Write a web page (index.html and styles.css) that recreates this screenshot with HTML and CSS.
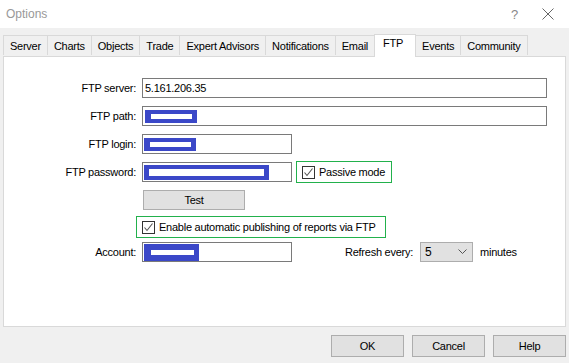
FILE: index.html
```html
<!DOCTYPE html>
<html lang="en">
<head>
	<meta charset="UTF-8">
	<title>Options</title>
<link rel="stylesheet" href="styles.css">
</head>
<body>

<div class="dialog">
	<div class="titleBar">
		<span class="title">Options</span>
		<span class="helpMark">?</span>
		<svg class="closeX" width="12" height="12" viewBox="0 0 12 12">
			<path d="M0.5 0.5 L11.5 11.5 M11.5 0.5 L0.5 11.5" stroke="#666" stroke-width="1" fill="none"/>
		</svg>
	</div>

	<div class="content">
		<div class="tabs">
			<div class="tab">Server</div>
			<div class="tab">Charts</div>
			<div class="tab">Objects</div>
			<div class="tab">Trade</div>
			<div class="tab">Expert Advisors</div>
			<div class="tab">Notifications</div>
			<div class="tab">Email</div>
			<div class="tab active">FTP</div>
			<div class="tab">Events</div>
			<div class="tab">Community</div>
		</div>

		<div class="panel">
			<div class="row first">
				<label class="lbl">FTP server:</label>
				<div class="field wide">5.161.206.35</div>
			</div>

			<div class="row">
				<label class="lbl">FTP path:</label>
				<div class="field wide"><span class="redact short"><span class="bar"></span></span></div>
			</div>

			<div class="row">
				<label class="lbl">FTP login:</label>
				<div class="field small"><span class="redact short"><span class="bar"></span></span></div>
			</div>

			<div class="row">
				<label class="lbl">FTP password:</label>
				<div class="field small"><span class="redact long"><span class="bar"></span></span></div>
				<div class="checkGroup passive">
					<span class="checkBox"><svg width="11" height="11" viewBox="0 0 11 11"><path d="M1.5 5.5 L4 8.5 L9.5 1.5" stroke="#555" stroke-width="1.1" fill="none"/></svg></span>
					<span>Passive mode</span>
				</div>
			</div>

			<div class="row testRow">
				<button class="btn test">Test</button>
			</div>

			<div class="row enableRow">
				<div class="checkGroup enable">
					<span class="checkBox"><svg width="11" height="11" viewBox="0 0 11 11"><path d="M1.5 5.5 L4 8.5 L9.5 1.5" stroke="#555" stroke-width="1.1" fill="none"/></svg></span>
					<span>Enable automatic publishing of reports via FTP</span>
				</div>
			</div>

			<div class="row">
				<label class="lbl">Account:</label>
				<div class="field small"><span class="redact short acc"><span class="bar"></span></span></div>
				<span class="refreshLbl">Refresh every:</span>
				<div class="select">
					<span>5</span>
					<svg width="9" height="6" viewBox="0 0 9 6"><path d="M0.5 0.5 L4.5 4.5 L8.5 0.5" stroke="#555" stroke-width="1" fill="none"/></svg>
				</div>
				<span class="unit">minutes</span>
			</div>
		</div>
	</div>

	<div class="footer">
		<button class="btn">OK</button>
		<button class="btn">Cancel</button>
		<button class="btn">Help</button>
	</div>
</div>

</body>
</html>
```

FILE: styles.css
```css
/* reset */
*{
	margin: 0;
	padding: 0;
	box-sizing: border-box;
}

body{
	width: 569px;
	height: 363px;
	background: #f0f0f0;
	font-family: "Liberation Sans", Arial, sans-serif;
	font-size: 11px;
	letter-spacing: -0.25px;
	color: #000;
	overflow: hidden;
}

.dialog{
	width: 569px;
	height: 363px;
	display: flex;
	flex-direction: column;
}

/* title bar */
.titleBar{
	height: 28px;
	background: #fff;
	display: flex;
	align-items: center;
	padding-left: 6px;
}

.title{
	font-size: 12px;
	color: #999;
	letter-spacing: 0;
	flex: 1;
}

.helpMark{
	font-size: 13px;
	color: #888;
	margin-right: 24px;
}

.closeX{
	margin-right: 15px;
}

/* tabs */
.content{
	padding: 6px 3px 0 3px;
}

.tabs{
	display: flex;
	align-items: flex-end;
	height: 22px;
}

.tab{
	height: 20px;
	padding: 4px 6px 0 6px;
	border: 1px solid #d9d9d9;
	border-bottom: none;
	margin-right: -1px;
	background: #f0f0f0;
	margin-bottom: 1px;
}

.tab.active{
	height: 23px;
	background: #fff;
	margin-bottom: -1px;
	padding: 2px 12px 0 8px;
	position: relative;
	z-index: 1;
}

.panel{
	height: 271px;
	width: 563px;
	background: #fff;
	border: 1px solid #d9d9d9;
	padding-top: 21px;
}

/* form rows */
.row{
	display: flex;
	align-items: center;
	height: 20px;
	margin-bottom: 8px;
}

.lbl{
	width: 132px;
	text-align: right;
	margin-right: 6px;
}

.field{
	height: 20px;
	border: 1px solid #7a7a7a;
	padding: 0 0 0 1px;
	display: flex;
	align-items: center;
}

.field.wide{
	width: 405px;
	padding-left: 2px;
}

.field.small{
	width: 150px;
}

/* blue blocks hiding the values */
.redact{
	background: #3b48c8;
	display: block;
	padding: 4px 5px 4px 6px;
}

.redact.short{
	width: 52px;
	height: 13px;
}

.redact.long{
	width: 125px;
	height: 15px;
	padding: 4px 5px 4px 5px;
}

.redact.acc{
	width: 55px;
	height: 17px;
	padding: 6px 5px 6px 7px;
}

.bar{
	display: block;
	height: 100%;
	background: #fff;
}

/* checkbox groups */
.checkGroup{
	display: flex;
	align-items: center;
	border: 1px solid #22b14c;
	height: 22px;
	padding-left: 5px;
}

.passive{
	width: 96px;
	margin-left: 4px;
}

.enable{
	width: 250px;
	margin-left: 132px;
}

.checkBox{
	width: 13px;
	height: 13px;
	border: 1px solid #333;
	margin-right: 4px;
	display: flex;
	align-items: center;
	justify-content: center;
}

/* buttons */
.btn{
	font-family: "Liberation Sans", Arial, sans-serif;
	font-size: 11px;
	letter-spacing: -0.25px;
	background: #e1e1e1;
	border: 1px solid #adadad;
	color: #000;
	width: 73px;
	height: 22px;
}

.testRow{
	margin-bottom: 6px;
}

.btn.test{
	width: 102px;
	height: 20px;
	margin-left: 139px;
}

.enableRow{
	height: 22px;
	margin-bottom: 4px;
}

.refreshLbl{
	margin-left: 53px;
	margin-right: 7px;
}

.select{
	width: 53px;
	height: 20px;
	background: #e1e1e1;
	border: 1px solid #adadad;
	display: flex;
	align-items: center;
	justify-content: space-between;
	padding: 0 5px 0 4px;
	font-size: 12px;
}

.unit{
	margin-left: 7px;
}

.footer{
	display: flex;
	justify-content: flex-end;
	gap: 8px;
	padding: 8px 3px 0 0;
}
```
